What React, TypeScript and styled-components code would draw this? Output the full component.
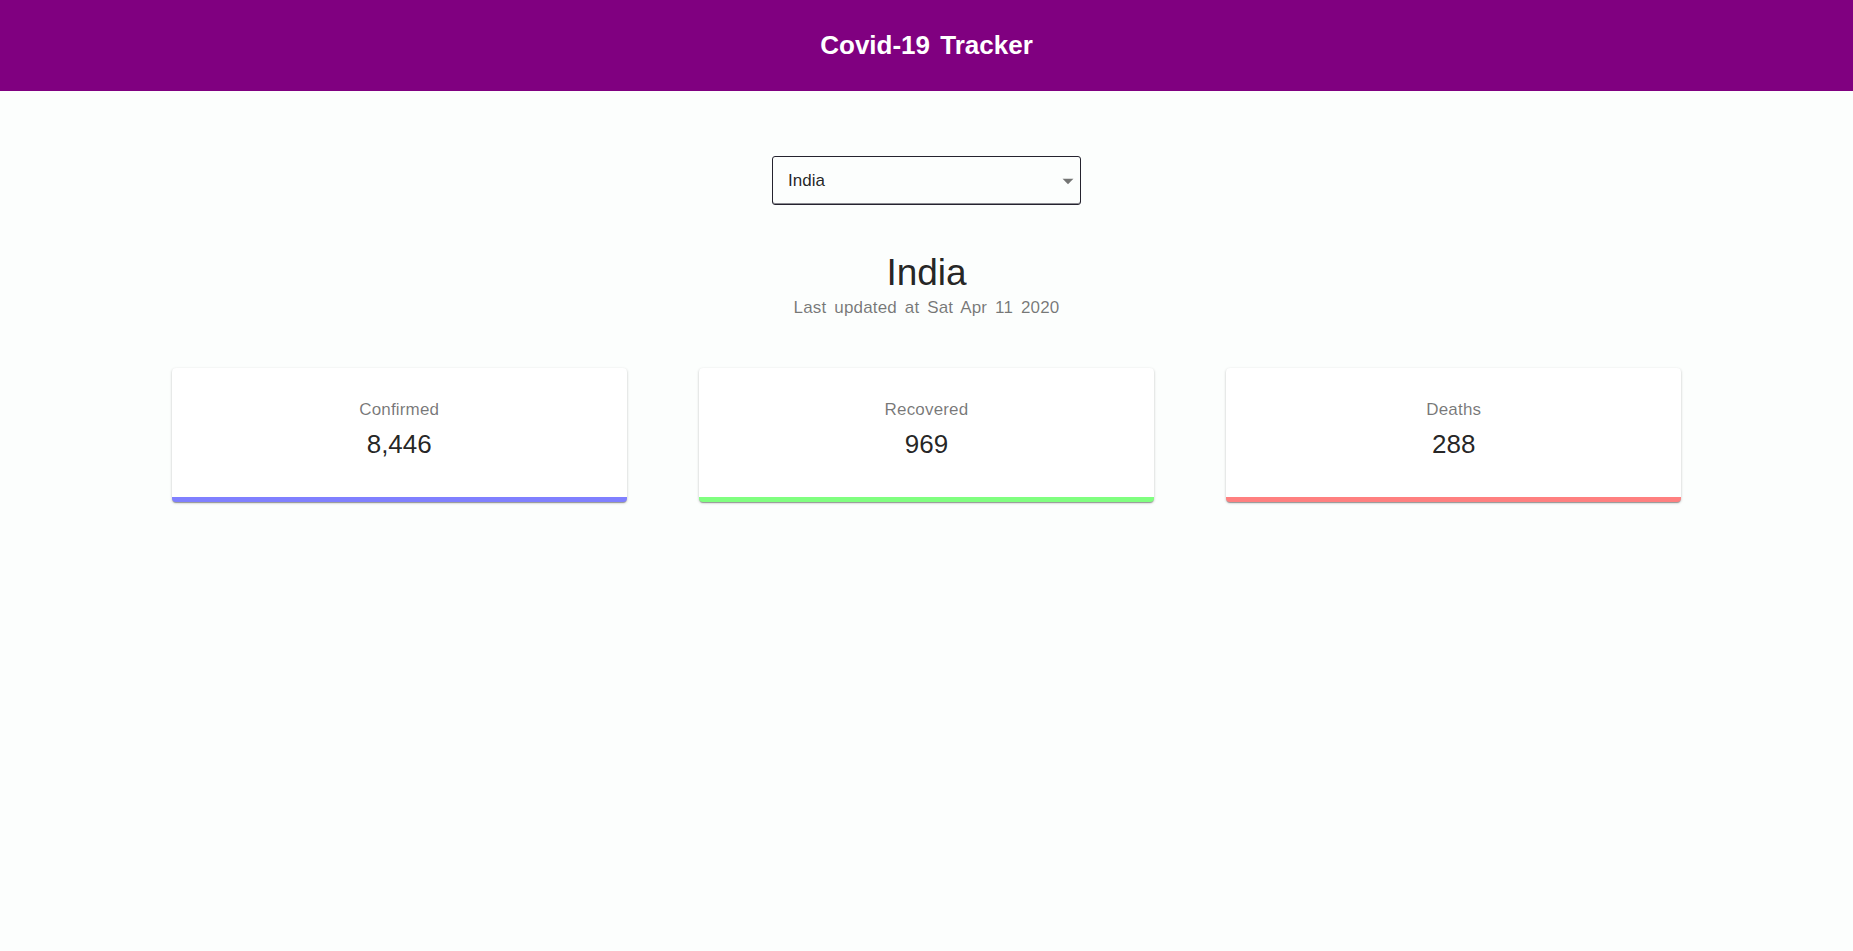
import React, { useState } from "react";
import styled, { createGlobalStyle } from "styled-components";

const GlobalStyle = createGlobalStyle`
  *, *::before, *::after { box-sizing: border-box; }
  body {
    margin: 0;
    background: #fcfefd;
    color: rgba(0, 0, 0, 0.87);
    font-family: "Liberation Sans", Arial, sans-serif;
  }
`;

const Header = styled.header`
  padding: 30px 16px;
  background: purple;
  color: #fff;
  text-align: center;
`;

const Title = styled.h1`
  margin: 0;
  font-size: 26px;
  line-height: 31px;
  word-spacing: 3px;
`;

const Main = styled.main`
  display: flex;
  flex-direction: column;
  align-items: center;
  padding: 65px 17px 32px;
`;

const Picker = styled.div`
  position: relative;
  width: 100%;
  max-width: 309px;
`;

const CountrySelect = styled.select`
  display: block;
  width: 100%;
  height: 49px;
  padding: 0 32px 0 15px;
  border: 1px solid #25232f;
  border-radius: 3px;
  appearance: none;
  background: #fcfefd;
  box-shadow: inset 0 -1px 0 #8a8a90;
  color: rgba(0, 0, 0, 0.87);
  font: 17px "Liberation Sans", Arial, sans-serif;
`;

const Arrow = styled.svg`
  position: absolute;
  top: 12px;
  right: 0;
  width: 26px;
  height: 26px;
  fill: rgba(0, 0, 0, 0.54);
  pointer-events: none;
`;

const Country = styled.h2`
  margin: 46px 0 1px;
  font-size: 37px;
  font-weight: 400;
  line-height: 44px;
`;

const Label = styled.p`
  margin: 0;
  color: rgba(0, 0, 0, 0.54);
  font-size: 17px;
  font-weight: 400;
  line-height: 24px;
  letter-spacing: 0.01em;
`;

const Updated = styled(Label)`
  word-spacing: 3px;
`;

const Cards = styled.section`
  display: grid;
  grid-template-columns: repeat(auto-fit, minmax(240px, 1fr));
  gap: 72px;
  width: 83%;
  margin-top: 48px;
`;

const Card = styled.article<{ $accent: string }>`
  padding: 30px 16px 37px;
  border-bottom: 5px solid ${({ $accent }) => $accent};
  border-radius: 4px;
  background: #fff;
  box-shadow:
    0 2px 1px -1px rgba(0, 0, 0, 0.2),
    0 1px 1px 0 rgba(0, 0, 0, 0.14),
    0 1px 3px 0 rgba(0, 0, 0, 0.2);
  text-align: center;
`;

const Count = styled.p`
  margin: 6px 0 0;
  font-size: 26px;
  line-height: 32px;
`;

const stats = [
  { label: "Confirmed", count: 8446, accent: "#8080ff" },
  { label: "Recovered", count: 969, accent: "#80ff80" },
  { label: "Deaths", count: 288, accent: "#ff8080" },
];

export default function App() {
  const [country, setCountry] = useState("India");
  return (
    <>
      <GlobalStyle />
      <Header>
        <Title>Covid-19 Tracker</Title>
      </Header>
      <Main>
        <Picker>
          <CountrySelect
            aria-label="Country"
            value={country}
            onChange={(event) => setCountry(event.target.value)}
          >
            <option>India</option>
          </CountrySelect>
          <Arrow viewBox="0 0 24 24" aria-hidden="true">
            <path d="M7 10l5 5 5-5z" />
          </Arrow>
        </Picker>
        <Country>{country}</Country>
        <Updated>Last updated at Sat Apr 11 2020</Updated>
        <Cards>
          {stats.map(({ label, count, accent }) => (
            <Card key={label} $accent={accent}>
              <Label as="h3">{label}</Label>
              <Count>{count.toLocaleString("en-US")}</Count>
            </Card>
          ))}
        </Cards>
      </Main>
    </>
  );
}
